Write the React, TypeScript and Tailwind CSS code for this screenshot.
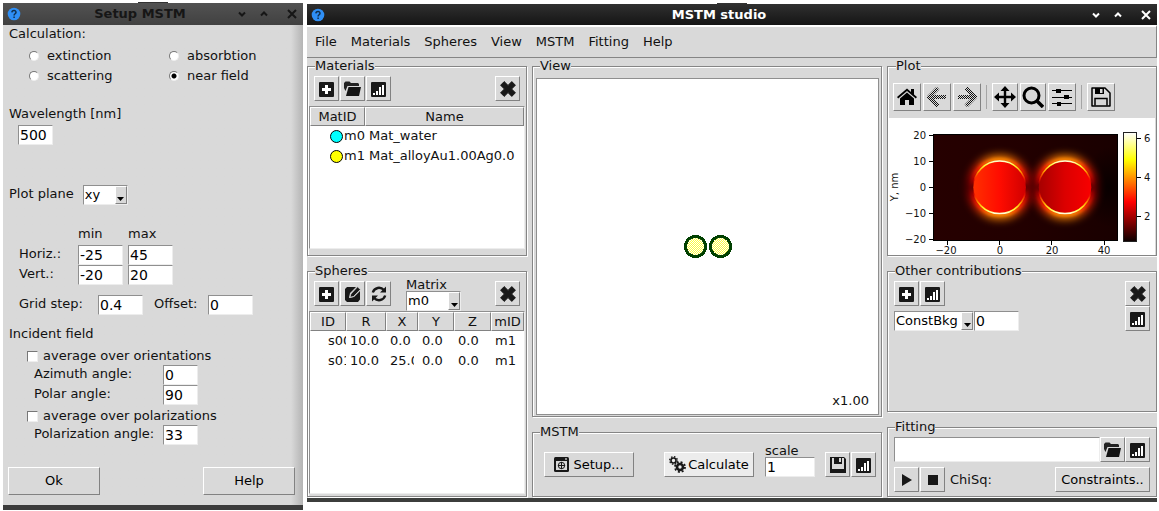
import type { ReactNode } from 'react';

const sunken =
  'h-5 rounded-none border border-t-[#8f8f8f] border-l-[#8f8f8f] border-r-[#ededed] border-b-[#ededed] bg-white text-black outline-none';
const raised =
  'flex items-center justify-center rounded-none border border-t-white border-l-white border-r-[#828282] border-b-[#828282] text-black';

function PlusIcon() {
  return (
    <svg width="16" height="16" viewBox="0 0 16 16" aria-hidden="true">
      <rect width="15" height="15" y="1" rx="1" fill="#181818" />
      <path d="M6 4h3v3h3v3H9v3H6v-3H3V7h3Z" fill="#fff" />
    </svg>
  );
}

function FolderIcon() {
  return (
    <svg width="17" height="16" viewBox="0 0 17 16" aria-hidden="true">
      <path d="M0 2 1.500 .5h4L7 2h7l1 1v2H3.500L1.500 10 0 7Z" fill="#222" />
      <path d="M4.500 6H17l-2 9H2Z" fill="#141414" />
    </svg>
  );
}

function ChartIcon() {
  return (
    <svg width="16" height="16" viewBox="0 0 16 16" aria-hidden="true">
      <rect width="15" height="15" y="1" rx="1" fill="#181818" />
      <g fill="#fff">
        <rect x="2" y="12" width="2" height="2" />
        <rect x="5" y="10" width="2" height="4" />
        <rect x="8" y="6" width="2" height="8" />
        <rect x="11" y="8" width="2" height="6" />
        <rect x="11" y="4" width="2" height="4" />
      </g>
    </svg>
  );
}

function EditIcon() {
  return (
    <svg width="16" height="16" viewBox="0 0 16 16" aria-hidden="true">
      <path d="M2 1h9L5 7 4 12l5-1 6-6v8.500L13 16H2L0 14V3Z" fill="#181818" />
      <path d="M5.800 8 12.500 .8 15.400 3.500 8.500 10.500 5 11.300Z" fill="#181818" stroke="#d9d9d9" strokeWidth=".8" />
    </svg>
  );
}

function RefreshIcon() {
  return (
    <svg width="16" height="16" viewBox="0 0 16 16" aria-hidden="true">
      <path d="M1.800 6.500C3.500 1.200 9.500 .5 13 4M14.200 9.500C12.500 14.800 6.500 15.500 3 12" fill="none" stroke="#181818" strokeWidth="2.400" />
      <path d="M15 .5v6H9ZM1 15.500v-6h6Z" fill="#181818" />
    </svg>
  );
}

function CrossIcon() {
  return (
    <svg width="16" height="16" viewBox="0 0 16 16" aria-hidden="true">
      <path d="M4.2 .6 8 4.4 11.8 .6 15.4 4.2 11.6 8 15.4 11.8 11.8 15.4 8 11.6 4.2 15.4 .6 11.8 4.4 8 .6 4.2Z" fill="#181818" stroke="#181818" strokeLinejoin="round" />
    </svg>
  );
}

function DiskIcon() {
  return (
    <svg width="16" height="16" viewBox="0 0 16 16" aria-hidden="true">
      <path d="M0 0h14l2 2v14H0Z" fill="#181818" />
      <path d="M2 1h12v11H2Z" fill="#d9d9d9" />
      <path d="M4 0h8v7H4Z" fill="#181818" />
      <path d="M9 1h2v4H9Z" fill="#d9d9d9" />
    </svg>
  );
}

function SetupIcon() {
  return (
    <svg width="15" height="15" viewBox="0 0 15 15" aria-hidden="true">
      <rect width="15" height="15" rx="1.5" fill="#181818" />
      <rect x="2" y="4" width="11" height="9" fill="#d9d9d9" />
      <path d="M11 1.5h2v1h-2z" fill="#fff" />
      <circle cx="7.5" cy="8.5" r="3.2" fill="none" stroke="#181818" />
      <path d="M4 8.5h7M7.5 5v7" stroke="#181818" />
    </svg>
  );
}

function GearsIcon() {
  return (
    <svg width="17" height="17" viewBox="0 0 17 17" aria-hidden="true" fill="none" stroke="#181818">
      <circle cx="4.500" cy="4.500" r="2.500" strokeWidth="1.600" />
      <circle cx="4.500" cy="4.500" r="3.800" strokeWidth="1.400" strokeDasharray="1.500 1.484" />
      <circle cx="11" cy="11" r="3" strokeWidth="2.600" />
      <circle cx="11" cy="11" r="5" strokeWidth="1.800" strokeDasharray="2 1.927" />
    </svg>
  );
}

function TitleBar({ title, active }: { title: string; active?: boolean }) {
  return (
    <header
      className={
        active
          ? 'relative flex h-[21px] shrink-0 items-center bg-linear-to-b from-[#303030] to-[#151515] pl-1 text-white'
          : 'relative flex h-[22px] shrink-0 items-center bg-linear-to-b from-[#525252] to-[#414141] pl-1 text-[#161616]'
      }
    >
      <span className="absolute inset-x-0 top-[-1px] mx-auto h-px w-[30px] bg-[#333]" />
      <svg width="14" height="14" viewBox="0 0 14 14" aria-hidden="true">
        <circle cx="7" cy="7" r="6.3" fill="#2f8ff5" />
        <path d="M4.9 5.4C5 2.9 9.2 3 9 5.4 8.9 6.7 7.1 6.8 7.1 8.4M7.1 9.4v1.5" fill="none" stroke="#10304f" strokeWidth="1.5" />
      </svg>
      <h1 className="flex-1 pl-[23px] text-center text-[13px] leading-5 font-bold">{title}</h1>
      <div className="flex w-[67px] items-center">
        <button aria-label="Minimize" className="flex w-3 justify-center">
          <svg width="8" height="8" viewBox="0 0 8 8"><path d="M1 2.5 4 5.5 7 2.5" fill="none" stroke="currentColor" strokeWidth="2" /></svg>
        </button>
        <button aria-label="Maximize" className="ml-[10px] flex w-3 justify-center">
          <svg width="8" height="8" viewBox="0 0 8 8"><path d="M1 5.5 4 2.5 7 5.5" fill="none" stroke="currentColor" strokeWidth="2" /></svg>
        </button>
        <button aria-label="Close" className="ml-4 flex w-3 justify-center">
          <svg width="10" height="10" viewBox="0 0 10 10"><path d="m1 1 8 8M9 1 1 9" fill="none" stroke="currentColor" strokeWidth="2" /></svg>
        </button>
      </div>
    </header>
  );
}

function Entry({ id, label, value, width }: { id: string; label?: string; value: string; width: string }) {
  return <input id={id} aria-label={label} defaultValue={value} className={`${sunken} ${width} px-px text-[14px] leading-4`} />;
}

function Combo({ id, label, value, width }: { id: string; label?: string; value: string; width: string }) {
  return (
    <div className={`relative ${width}`}>
      <select id={id} aria-label={label} className={`${sunken} block w-full appearance-none px-px text-[13px] leading-4`}>
        <option>{value}</option>
      </select>
      <span className="pointer-events-none absolute top-px right-px flex h-[18px] w-3 items-end justify-center border border-t-white border-l-white border-r-[#828282] border-b-[#828282] bg-[#d9d9d9] pb-[2px]">
        <svg width="7" height="4" viewBox="0 0 7 4"><path d="M0 0h7L3.5 4Z" /></svg>
      </span>
    </div>
  );
}

function IconButton({ label, children }: { label: string; children: ReactNode }) {
  return (
    <button aria-label={label} className={`${raised} size-[25px] shrink-0 bg-[#d9d9d9]`}>
      {children}
    </button>
  );
}

function Frame({ title, className, children }: { title: string; className: string; children: ReactNode }) {
  return (
    <fieldset className={`min-w-0 border border-[#858585] shadow-[inset_1px_1px_0_#fff,1px_1px_0_#fff] ${className}`}>
      <legend className="ml-[7px] bg-[#d9d9d9] leading-4">{title}</legend>
      {children}
    </fieldset>
  );
}

function Radio({ label, checked }: { label: string; checked?: boolean }) {
  return (
    <label className="flex h-5 items-center gap-2">
      <input
        type="radio"
        name="calculation"
        defaultChecked={checked}
        className="size-[10px] appearance-none rounded-full border border-t-[#777] border-l-[#777] border-r-[#eee] border-b-[#eee] bg-white checked:bg-[radial-gradient(circle,#000_0_2px,#fff_3px)]"
      />
      {label}
    </label>
  );
}

function Check({ label }: { label: string }) {
  return (
    <label className="ml-[18px] flex h-5 items-center gap-[5px] pt-[2px]">
      <input type="checkbox" className="size-[11px] appearance-none border border-t-[#777] border-l-[#777] border-r-[#eee] border-b-[#eee] bg-white" />
      {label}
    </label>
  );
}

function AngleRow({ id, label, value }: { id: string; label: string; value: string }) {
  return (
    <div className="ml-[25px] flex h-5">
      <label htmlFor={id} className="w-[129px] leading-[18px]">{label}</label>
      <Entry id={id} value={value} width="w-[35px]" />
    </div>
  );
}

function SetupWindow() {
  return (
    <section className="flex w-[300px] shrink-0 flex-col border-b-[5px] border-[#3c3c3c] bg-[#d9d9d9]">
      <TitleBar title="Setup MSTM" />
      <div className="flex flex-1 flex-col bg-linear-to-r from-[#d9d9d9] from-96% to-[#b4b4b4] pb-[10px] pl-[6px]">
        <p className="leading-[18px]">Calculation:</p>
        <div className="mt-[3px] ml-5 grid grid-cols-[140px_1fr]">
          <Radio label="extinction" />
          <Radio label="absorbtion" />
          <Radio label="scattering" />
          <Radio label="near field" checked />
        </div>
        <label htmlFor="wavelength" className="mt-[18px] leading-5">Wavelength [nm]</label>
        <div className="mt-px ml-[9px]">
          <Entry id="wavelength" value="500" width="w-[35px] block" />
        </div>
        <div className="mt-10 flex gap-[9px]">
          <label htmlFor="plane" className="leading-[18px]">Plot plane</label>
          <Combo id="plane" value="xy" width="w-[45px]" />
        </div>
        <div className="mt-[19px] ml-[10px] grid grid-cols-[54px_45px_45px] gap-x-[5px] leading-5">
          <span />
          <span className="mb-px">min</span>
          <span className="mb-px">max</span>
          <label htmlFor="hmin" className="leading-[18px]">Horiz.:</label>
          <Entry id="hmin" value="-25" width="w-full" />
          <Entry id="hmax" label="Horizontal maximum" value="45" width="w-full" />
          <label htmlFor="vmin" className="leading-[18px]">Vert.:</label>
          <Entry id="vmin" value="-20" width="w-full" />
          <Entry id="vmax" label="Vertical maximum" value="20" width="w-full" />
        </div>
        <div className="mt-[10px] ml-[10px] flex">
          <label htmlFor="step" className="w-[79px] leading-[18px]">Grid step:</label>
          <Entry id="step" value="0.4" width="w-[45px]" />
          <label htmlFor="offset" className="ml-[11px] w-[54px] leading-[18px]">Offset:</label>
          <Entry id="offset" value="0" width="w-[45px]" />
        </div>
        <p className="mt-[9px] leading-5">Incident field</p>
        <div className="mt-px">
          <Check label="average over orientations" />
          <AngleRow id="azimuth" label="Azimuth angle:" value="0" />
          <AngleRow id="polar" label="Polar angle:" value="90" />
          <Check label="average over polarizations" />
          <AngleRow id="polarization" label="Polarization angle:" value="33" />
        </div>
        <div className="-ml-px mt-auto flex justify-between pr-2">
          <button className={`${raised} h-7 w-[92px] bg-[#d9d9d9]`}>Ok</button>
          <button className={`${raised} h-7 w-[92px] bg-[#d9d9d9]`}>Help</button>
        </div>
      </div>
    </section>
  );
}

const headCell =
  'h-[19px] border border-t-white border-l-white border-r-[#828282] border-b-[#828282] bg-[#d9d9d9] p-0 text-center leading-4 font-normal';

function Materials() {
  const rows = [
    { id: 'm0', name: 'Mat_water', color: '#00ffff' },
    { id: 'm1', name: 'Mat_alloyAu1.00Ag0.0', color: '#ffff00' },
  ];
  return (
    <Frame title="Materials" className="pb-[6px]">
      <div className="flex gap-px px-[6px] pt-[2px]">
        <IconButton label="Add material"><PlusIcon /></IconButton>
        <IconButton label="Open material"><FolderIcon /></IconButton>
        <IconButton label="Plot material"><ChartIcon /></IconButton>
        <div className="ml-auto"><IconButton label="Delete material"><CrossIcon /></IconButton></div>
      </div>
      <div className="mx-px mt-[5px] h-[143px] border border-t-[#8f8f8f] border-l-[#8f8f8f] border-r-[#ededed] border-b-[#ededed] bg-white">
        <table className="w-full table-fixed border-separate border-spacing-0">
          <colgroup><col className="w-[55px]" /><col /></colgroup>
          <thead><tr><th className={headCell}>MatID</th><th className={headCell}>Name</th></tr></thead>
          <tbody>
            {rows.map((r) => (
              <tr key={r.id} className="h-5">
                <td className="p-0">
                  <span className="flex items-center pl-5 leading-5">
                    <svg width="14" height="14" viewBox="0 0 14 14" className="shrink-0"><circle cx="6.500" cy="7.5" r="6" fill={r.color} stroke="#000" /></svg>
                    {r.id}
                  </span>
                </td>
                <td className="overflow-hidden p-0 pl-1 leading-5 whitespace-nowrap">{r.name}</td>
              </tr>
            ))}
          </tbody>
        </table>
      </div>
    </Frame>
  );
}

function Spheres() {
  const rows = [
    ['s00', '10.0', '0.0', '0.0', '0.0', 'm1'],
    ['s01', '10.0', '25.0', '0.0', '0.0', 'm1'],
  ];
  return (
    <Frame title="Spheres" className="flex-1 pb-[2px]">
      <div className="flex h-full flex-col">
        <div className="flex gap-px px-[6px]">
          <div className="flex gap-px pt-[2px]">
            <IconButton label="Add sphere"><PlusIcon /></IconButton>
            <IconButton label="Edit sphere"><EditIcon /></IconButton>
            <IconButton label="Refresh spheres"><RefreshIcon /></IconButton>
          </div>
          <div className="ml-[14px] flex flex-col">
            <label htmlFor="matrix" className="leading-3">Matrix</label>
            <Combo id="matrix" value="m0" width="w-[55px]" />
          </div>
          <div className="ml-auto pt-[2px]"><IconButton label="Delete sphere"><CrossIcon /></IconButton></div>
        </div>
        <div className="mx-px flex-1 border border-t-[#8f8f8f] border-l-[#8f8f8f] border-r-[#ededed] border-b-[#ededed] bg-white">
          <table className="w-full table-fixed border-separate border-spacing-0">
            <colgroup>
              <col className="w-9" /><col className="w-10" /><col className="w-8" /><col className="w-9" /><col className="w-[37px]" /><col />
            </colgroup>
            <thead>
              <tr>{['ID', 'R', 'X', 'Y', 'Z', 'mID'].map((h) => <th key={h} className={headCell}>{h}</th>)}</tr>
            </thead>
            <tbody>
              {rows.map((r) => (
                <tr key={r[0]} className="h-5">
                  {r.map((c, i) => (
                    <td key={i} className={`overflow-hidden p-0 leading-5 whitespace-nowrap ${i === 0 ? 'pl-[18px]' : 'pl-1'}`}>
                      <span className={`block overflow-hidden ${i === 2 ? 'mr-1' : ''}`}>{c}</span>
                    </td>
                  ))}
                </tr>
              ))}
            </tbody>
          </table>
        </div>
      </div>
    </Frame>
  );
}

function SphereView() {
  return (
    <Frame title="View" className="flex-1 pb-px">
      <div className="h-full pt-1 pr-[2px] pl-[3px]">
        <div className="relative grid h-full place-items-center border border-[#8f8f8f] bg-white">
          <svg width="48" height="23" viewBox="0 0 48 23">
            <defs>
              <pattern id="dither" width="2" height="2" patternUnits="userSpaceOnUse">
                <rect width="1" height="1" fill="#ffff40" />
                <rect x="1" y="1" width="1" height="1" fill="#ffff40" />
              </pattern>
            </defs>
            <g shapeRendering="crispEdges" stroke="#004000" strokeWidth="3">
              <circle cx="11.5" cy="11.5" r="10" fill="#fff" />
              <circle cx="36.5" cy="11.5" r="10" fill="#fff" />
            </g>
            <circle cx="11.5" cy="11.5" r="8.500" fill="url(#dither)" />
            <circle cx="36.5" cy="11.5" r="8.500" fill="url(#dither)" />
          </svg>
          <span className="absolute right-[9px] bottom-[5px] leading-4">x1.00</span>
        </div>
      </div>
    </Frame>
  );
}

function Mstm() {
  return (
    <Frame title="MSTM" className="pb-[19px]">
      <div className="flex items-end pt-[5px] pr-[5px] pl-[11px]">
        <button className={`${raised} h-[25px] w-[90px] gap-1 bg-[#d9d9d9]`}><SetupIcon />Setup...</button>
        <button className={`${raised} ml-[30px] h-[25px] w-[90px] gap-[2px] bg-[#ececec]`}><GearsIcon />Calculate</button>
        <div className="ml-[11px] flex flex-col">
          <label htmlFor="scale" className="leading-3">scale</label>
          <Entry id="scale" value="1" width="w-[50px]" />
        </div>
        <div className="ml-auto flex gap-px">
          <IconButton label="Save result"><DiskIcon /></IconButton>
          <IconButton label="Plot result"><ChartIcon /></IconButton>
        </div>
      </div>
    </Frame>
  );
}

function ToolButton({ label, width = 'w-7', children }: { label: string; width?: string; children: ReactNode }) {
  return <button aria-label={label} className={`${raised} h-7 shrink-0 bg-[#d9d9d9] ${width}`}>{children}</button>;
}

function PlotToolbar() {
  return (
    <div className="flex items-center gap-[2px] pt-[9px] pb-[7px] pl-1">
      <ToolButton label="Home">
        <svg width="20" height="18" viewBox="0 0 20 18"><path d="M0 9 10 .5l4 3.400V1h3v5.500l3 2.500-1.200 1.400L10 3 1.200 10.400Z" /><path d="m10 4.500 7 6V17h-5v-5H8v5H3v-6.500Z" /></svg>
      </ToolButton>
      <ToolButton label="Back">
        <svg width="20" height="20" viewBox="0 0 20 20"><path d="M11 1 2 10l9 9M3 10h16" fill="none" stroke="url(#stipple)" strokeWidth="4" /></svg>
      </ToolButton>
      <ToolButton label="Forward">
        <svg width="20" height="20" viewBox="0 0 20 20">
          <defs>
            <pattern id="stipple" width="2" height="2" patternUnits="userSpaceOnUse"><path d="M0 0h1v1H0ZM1 1h1v1H1Z" fill="#111" /></pattern>
          </defs>
          <path d="m9 1 9 9-9 9M17 10H1" fill="none" stroke="url(#stipple)" strokeWidth="4" />
        </svg>
      </ToolButton>
      <span className="mx-[3px] h-6 w-px bg-[#a5a5a5]" />
      <ToolButton label="Pan" width="w-[26px]">
        <svg width="24" height="24" viewBox="0 0 24 24"><path d="M12 3v18M3 12h18" stroke="#000" strokeWidth="2.4" /><path d="m12 1 4.5 5h-9ZM12 23l4.5-5h-9ZM1 12l5-4.5v9ZM23 12l-5-4.5v9Z" /></svg>
      </ToolButton>
      <ToolButton label="Zoom" width="w-[26px]">
        <svg width="22" height="22" viewBox="0 0 22 22"><circle cx="9.500" cy="9.500" r="7.500" fill="none" stroke="#000" strokeWidth="3" /><path d="m15 15 6 6" stroke="#000" strokeWidth="3.500" /></svg>
      </ToolButton>
      <ToolButton label="Configure subplots">
        <svg width="20" height="20" viewBox="0 0 20 20" shapeRendering="crispEdges"><path d="M0 3h20v1H0ZM0 10h20v1H0ZM0 16h20v1H0ZM4 2h5v4H4ZM12 8h5v4h-5ZM5 15h4v4H5Z" /></svg>
      </ToolButton>
      <span className="mx-[3px] h-6 w-px bg-[#a5a5a5]" />
      <ToolButton label="Save figure">
        <svg width="20" height="20" viewBox="0 0 20 20"><path d="M1 1h13l5 5v13H1Z" fill="none" stroke="#000" strokeWidth="1.500" strokeLinejoin="round" /><path d="M4 1h9v6H4Z" /><path d="M9 2h2.500v4H9Z" fill="#d9d9d9" /><path d="M4 18.500v-7h12v7" fill="none" stroke="#000" strokeWidth="1.500" /></svg>
      </ToolButton>
    </div>
  );
}

const spheresInPlot = [
  { cx: 110.6, fill: 'url(#inner0)' },
  { cx: 176, fill: 'url(#inner1)' },
];

function FieldPlot() {
  return (
    <svg viewBox="0 0 266 137" className="block w-full bg-white" role="img" aria-label="Near field map">
      <defs>
        <linearGradient id="field"><stop offset="0" stopColor="#260000" /><stop offset=".5" stopColor="#220000" /><stop offset="1" stopColor="#190000" /></linearGradient>
        <radialGradient id="shade"><stop offset="0" stopColor="#080000" /><stop offset="1" stopColor="#080000" stopOpacity="0" /></radialGradient>
        <linearGradient id="inner0"><stop offset="0" stopColor="#ff3000" /><stop offset=".5" stopColor="#ff0c00" /><stop offset="1" stopColor="#d00000" /></linearGradient>
        <linearGradient id="inner1"><stop offset="0" stopColor="#a60000" /><stop offset=".5" stopColor="#dc0000" /><stop offset="1" stopColor="#f80000" /></linearGradient>
        <linearGradient id="halo" x1="0" y1="0" x2="0" y2="1"><stop offset="0" stopColor="#ff8a00" /><stop offset=".14" stopColor="#ff2a00" /><stop offset=".35" stopColor="#b00000" /><stop offset=".5" stopColor="#600000" /><stop offset=".65" stopColor="#b00000" /><stop offset=".86" stopColor="#ff2a00" /><stop offset="1" stopColor="#ff8a00" /></linearGradient>
        <linearGradient id="rim" x1="0" y1="0" x2="0" y2="1"><stop offset="0" stopColor="#ffffe0" /><stop offset=".08" stopColor="#ffff30" /><stop offset=".2" stopColor="#ffa000" /><stop offset=".34" stopColor="#ff2000" stopOpacity=".7" /><stop offset=".45" stopColor="#d00000" stopOpacity="0" /><stop offset=".55" stopColor="#d00000" stopOpacity="0" /><stop offset=".66" stopColor="#ff2000" stopOpacity=".7" /><stop offset=".8" stopColor="#ffa000" /><stop offset=".92" stopColor="#ffff30" /><stop offset="1" stopColor="#ffffe0" /></linearGradient>
        <linearGradient id="bar" x1="0" y1="0" x2="0" y2="1"><stop offset="0" stopColor="#fff" /><stop offset=".25" stopColor="#ff0" /><stop offset=".635" stopColor="#f00" /><stop offset="1" stopColor="#0b0000" /></linearGradient>
        <filter id="wide" x="-40%" y="-40%" width="180%" height="180%" colorInterpolationFilters="sRGB"><feGaussianBlur stdDeviation="4" /></filter>
        <filter id="soft" x="-40%" y="-40%" width="180%" height="180%" colorInterpolationFilters="sRGB"><feGaussianBlur stdDeviation="1.500" /></filter>
        <clipPath id="axes"><rect x="44" y="16" width="184" height="106" /></clipPath>
      </defs>
      <g clipPath="url(#axes)">
        <rect x="44" y="16" width="184" height="106" fill="url(#field)" />
        <ellipse cx="220" cy="69" rx="26" ry="40" fill="url(#shade)" />
        {spheresInPlot.map((s) => (
          <g key={s.cx}>
            <circle cx={s.cx} cy="69.300" r="28" fill="none" stroke="url(#halo)" strokeWidth="8" filter="url(#wide)" />
            <circle cx={s.cx} cy="69.300" r="27.500" fill="none" stroke="url(#halo)" strokeWidth="4" filter="url(#soft)" />
          </g>
        ))}
        {spheresInPlot.map((s) => (
          <circle key={s.cx} cx={s.cx} cy="69.300" r="26.300" fill={s.fill} stroke="url(#rim)" strokeWidth="1.500" />
        ))}
      </g>
      <rect x="44.500" y="16.500" width="184" height="106" fill="none" stroke="#000" />
      <rect x="234.500" y="14.500" width="13" height="109" fill="url(#bar)" stroke="#222" />
      <path d="M40 17.500h4M40 43.500h4M40 69.500h4M40 95.500h4M40 121.500h4M58.500 123v4M110.500 123v4M162.500 123v4M215.500 123v4M248 20.500h4M248 59.500h4M248 98.500h4" stroke="#000" />
      <g fontFamily="DejaVu Sans" fontSize="10" fill="#111">
        <g textAnchor="end"><text x="37" y="21">20</text><text x="37" y="47">10</text><text x="37" y="73">0</text><text x="37" y="99">−10</text><text x="37" y="125">−20</text></g>
        <g textAnchor="middle"><text x="57" y="136">−20</text><text x="111" y="136">0</text><text x="163" y="136">20</text><text x="215" y="136">40</text></g>
        <text x="255" y="24">6</text><text x="255" y="63">4</text><text x="255" y="102">2</text>
        <text textAnchor="middle" transform="translate(9 69) rotate(-90)">Y, nm</text>
      </g>
    </svg>
  );
}

function Contributions() {
  return (
    <Frame title="Other contributions" className="flex-1">
      <div className="flex justify-between px-[6px] pt-[2px]">
        <div>
          <div className="flex gap-px">
            <IconButton label="Add contribution"><PlusIcon /></IconButton>
            <IconButton label="Plot contributions"><ChartIcon /></IconButton>
          </div>
          <div className="mt-[5px] flex">
            <Combo id="contribution" label="Contribution type" value="ConstBkg" width="w-[80px]" />
            <Entry id="background" label="Background value" value="0" width="w-[45px]" />
          </div>
        </div>
        <div>
          <IconButton label="Delete contribution"><CrossIcon /></IconButton>
          <IconButton label="Plot contribution"><ChartIcon /></IconButton>
        </div>
      </div>
    </Frame>
  );
}

function Fitting() {
  return (
    <Frame title="Fitting" className="pb-1">
      <div className="flex px-[6px] pt-[2px]">
        <input aria-label="Experimental data file" className="h-[25px] min-w-0 flex-1 border border-t-[#8f8f8f] border-l-[#8f8f8f] border-r-[#ededed] border-b-[#ededed] bg-white" />
        <IconButton label="Open data"><FolderIcon /></IconButton>
        <IconButton label="Plot data"><ChartIcon /></IconButton>
      </div>
      <div className="mt-[5px] flex items-center gap-px px-[6px]">
        <IconButton label="Start fit"><svg width="12" height="12" viewBox="0 0 12 12"><path d="M1 0 11 6 1 12Z" fill="#181818" /></svg></IconButton>
        <IconButton label="Stop fit"><svg width="10" height="10" viewBox="0 0 10 10"><path d="M0 0h10v10H0Z" fill="#181818" /></svg></IconButton>
        <span className="ml-[4px]">ChiSq:</span>
        <button className={`${raised} ml-auto h-[25px] w-[95px] bg-[#d9d9d9]`}>Constraints..</button>
      </div>
    </Frame>
  );
}

function StudioWindow() {
  return (
    <section className="mt-px mb-2 flex min-w-[800px] flex-1 flex-col border-b-4 border-[#3c3e3c] bg-[#d9d9d9]">
      <TitleBar title="MSTM studio" active />
      <nav className="flex h-[33px] items-center gap-[14px] border-t-2 border-r border-b border-t-white border-r-[#858585] border-b-[#858585] pl-2">
        {['File', 'Materials', 'Spheres', 'View', 'MSTM', 'Fitting', 'Help'].map((m) => (
          <a key={m} href={`#${m.toLowerCase()}`} className="leading-4">{m}</a>
        ))}
      </nav>
      <div className="grid flex-1 grid-cols-[220px_1fr_270px] gap-[5px] pb-px">
        <div className="flex flex-col gap-[7px]"><Materials /><Spheres /></div>
        <div className="flex flex-col gap-[7px]"><SphereView /><Mstm /></div>
        <div className="flex flex-col gap-[7px]">
          <Frame title="Plot" className="px-px"><PlotToolbar /><FieldPlot /></Frame>
          <Contributions />
          <Fitting />
        </div>
      </div>
    </section>
  );
}

export default function App() {
  return (
    <main className="flex min-h-screen gap-1 bg-white pt-[3px] pr-[2px] pb-px pl-[3px] font-['DejaVu_Sans',sans-serif] text-[13px] text-[#111]">
      <SetupWindow />
      <StudioWindow />
    </main>
  );
}
